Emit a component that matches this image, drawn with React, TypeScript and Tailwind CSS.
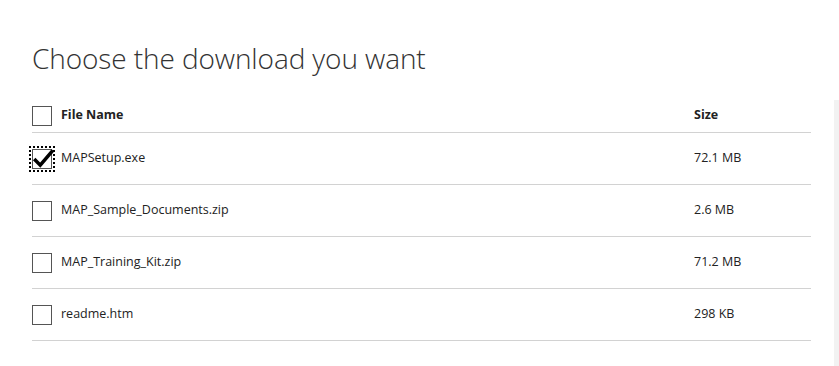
import React from "react";

const rows = [
  { name: "MAPSetup.exe", size: "72.1 MB", checked: true },
  { name: "MAP_Sample_Documents.zip", size: "2.6 MB", checked: false },
  { name: "MAP_Training_Kit.zip", size: "71.2 MB", checked: false },
  { name: "readme.htm", size: "298 KB", checked: false },
];

function Box({ checked }: { checked?: boolean }) {
  if (checked) {
    return (
      <div className="relative h-[20px] w-[20px] shrink-0 border border-[#555] bg-white outline-2 outline-dotted outline-offset-1 outline-black">
        <svg viewBox="0 0 20 20" className="absolute -left-[1px] -top-[3px] h-[22px] w-[22px]">
          <path d="M2 11 L7.5 16.5 L19 3" fill="none" stroke="#000" strokeWidth="3.2" />
        </svg>
      </div>
    );
  }
  return <div className="h-[20px] w-[20px] shrink-0 border border-[#555] bg-white" />;
}

export default function App() {
  return (
    <div
      className="flex h-[366px] w-[839px] overflow-hidden bg-white text-[#222]"
      style={{ fontFamily: '"Open Sans", "Noto Sans", sans-serif' }}
    >
      <div className="w-[811px] shrink-0 pl-[32px] pt-[36px]">
        <h1 className="text-[28px] font-light leading-[44px] tracking-[-0.1px] text-[#333]">
          Choose the download you want
        </h1>
        <div className="mt-[22px] flex h-[31px] items-start border-b border-[#d2d2d2] pt-[4px]">
          <Box />
          <div className="ml-[9px] w-[633px] text-[12.5px] font-bold">File Name</div>
          <div className="text-[12.5px] font-bold">Size</div>
        </div>
        {rows.map((r) => (
          <div key={r.name} className="flex h-[52px] items-center border-b border-[#d2d2d2]">
            <Box checked={r.checked} />
            <div className="ml-[9px] w-[633px] text-[12.5px]">{r.name}</div>
            <div className="text-[12.5px]">{r.size}</div>
          </div>
        ))}
      </div>
      <div className="ml-auto mt-[100px] w-[5px] bg-[#f2f2f2]" />
    </div>
  );
}
